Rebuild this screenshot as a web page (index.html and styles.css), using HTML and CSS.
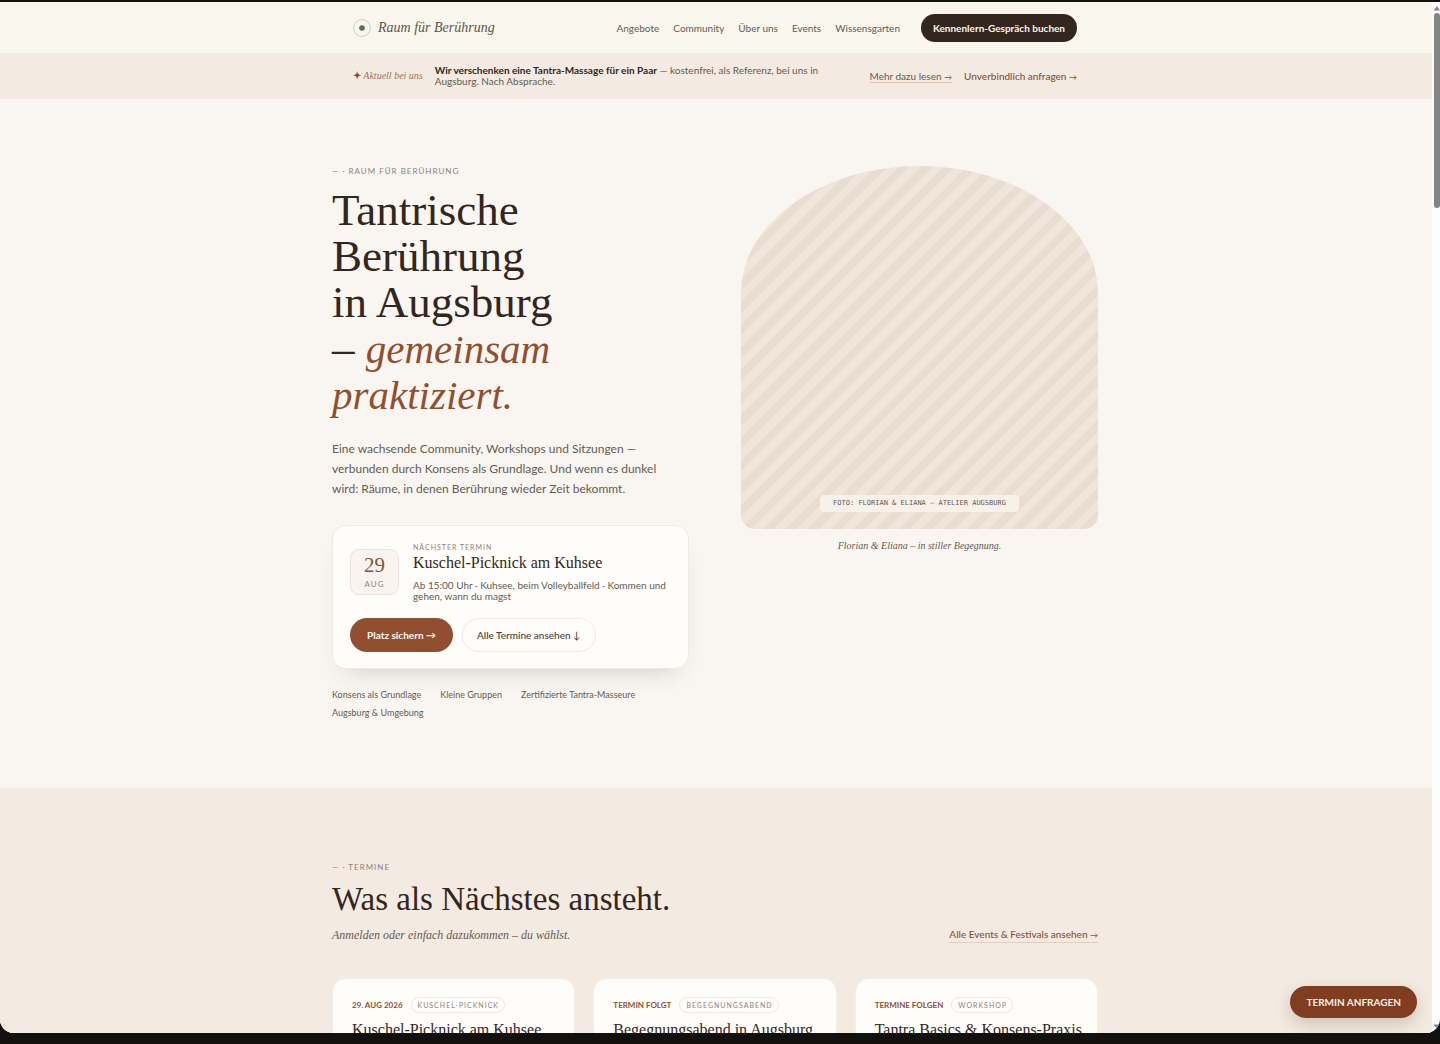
FILE: index.html
```html
<!DOCTYPE html>
<html lang="de">
<head>
<meta charset="utf-8">
<meta name="viewport" content="width=device-width, initial-scale=1">
<title>Raum für Berührung</title>
<link rel="stylesheet" href="styles.css">
</head>
<body>
<div class="window">
  <div class="page">
    <header class="header">
      <div class="bar">
        <a class="brand" href="#">
          <svg class="brand-mark" viewBox="0 0 18 18" aria-hidden="true">
            <circle cx="9" cy="9" r="8.4" fill="none" stroke="#cdd0c2" stroke-width="1"/>
            <circle cx="9" cy="9" r="2.8" fill="#5b6e50"/>
          </svg>
          Raum für Berührung
        </a>
        <nav class="nav" aria-label="Hauptmenü">
          <a href="#">Angebote</a>
          <a href="#">Community</a>
          <a href="#">Über uns</a>
          <a href="#">Events</a>
          <a href="#">Wissensgarten</a>
        </nav>
        <button class="btn btn-dark" type="button">Kennenlern-Gespräch buchen</button>
      </div>
    </header>

    <aside class="notice">
      <div class="bar">
        <span class="notice-tag"><b>✦</b> Aktuell bei uns</span>
        <p class="notice-text"><strong>Wir verschenken eine Tantra-Massage für ein Paar</strong> — kostenfrei, als Referenz, bei uns in Augsburg. Nach Absprache.</p>
        <div class="notice-links">
          <a class="underlined" href="#">Mehr dazu lesen <span class="arrow">→</span></a>
          <a class="accent" href="#">Unverbindlich anfragen <span class="arrow">→</span></a>
        </div>
      </div>
    </aside>

    <main>
      <section class="hero">
        <div class="container hero-grid">
          <div class="hero-copy">
            <p class="eyebrow">— · Raum für Berührung</p>
            <h1>Tantrische<br>Berührung<br>in Augsburg<br>– <em>gemeinsam<br>praktiziert.</em></h1>
            <p class="lead">Eine wachsende Community, Workshops und Sitzungen — verbunden durch Konsens als Grundlage. Und wenn es dunkel wird: Räume, in denen Berührung wieder Zeit bekommt.</p>
            <article class="next">
              <div class="next-info">
                <time class="date" datetime="2026-08-29"><span class="date-day">29</span><span class="date-month">Aug</span></time>
                <div>
                  <p class="next-label">Nächster Termin</p>
                  <h2 class="next-title">Kuschel-Picknick am Kuhsee</h2>
                  <p class="next-meta">Ab 15:00 Uhr · Kuhsee, beim Volleyballfeld · Kommen und gehen, wann du magst</p>
                </div>
              </div>
              <div class="next-actions">
                <button class="btn btn-primary" type="button">Platz sichern →</button>
                <button class="btn btn-outline" type="button">Alle Termine ansehen ↓</button>
              </div>
            </article>
            <ul class="facts">
              <li>Konsens als Grundlage</li>
              <li>Kleine Gruppen</li>
              <li>Zertifizierte Tantra-Masseure</li>
              <li>Augsburg &amp; Umgebung</li>
            </ul>
          </div>
          <figure class="portrait">
            <div class="arch"><span class="arch-label">Foto: Florian &amp; Eliana — Atelier Augsburg</span></div>
            <figcaption>Florian &amp; Eliana – in stiller Begegnung.</figcaption>
          </figure>
        </div>
      </section>

      <section class="events">
        <div class="container">
          <p class="eyebrow">— · Termine</p>
          <h2 class="events-title">Was als Nächstes ansteht.</h2>
          <div class="events-intro">
            <p>Anmelden oder einfach dazukommen – du wählst.</p>
            <a class="all-events" href="#">Alle Events &amp; Festivals ansehen <span class="arrow">→</span></a>
          </div>
          <div class="cards">
            <article class="card">
              <div class="card-top"><span class="when">29. Aug 2026</span><span class="tag">Kuschel-Picknick</span></div>
              <h3>Kuschel-Picknick am Kuhsee</h3>
            </article>
            <article class="card">
              <div class="card-top"><span class="when">Termin folgt</span><span class="tag">Begegnungsabend</span></div>
              <h3>Begegnungsabend in Augsburg</h3>
            </article>
            <article class="card">
              <div class="card-top"><span class="when">Termine folgen</span><span class="tag">Workshop</span></div>
              <h3>Tantra Basics &amp; Konsens-Praxis</h3>
            </article>
          </div>
        </div>
      </section>
    </main>
  </div>
  <div class="scrollbar" aria-hidden="true">
    <svg viewBox="0 0 8 8"><path d="M1.500 6.500 5 2l3 4.500z" fill="#858585"/></svg>
    <span class="thumb"></span>
    <svg class="down" viewBox="0 0 8 8"><path d="M1.500 1.500h7L5 6z" fill="#858585"/></svg>
  </div>
  <button class="btn floating" type="button">Termin anfragen</button>
</div>
</body>
</html>
```
FILE: styles.css
```css
:root {
  --ink: #33261e;
  --text: #665b53;
  --muted: #8d837b;
  --rust: #914f30;
  --cream: #f9f6f1;
  --sand: #f3eae1;
  --paper: #fffdf9;
  --line: #efe9e3;
  --serif: "Liberation Serif", serif;
  --sans: Lato, sans-serif;
}

* { box-sizing: border-box; }

body {
  margin: 0;
  height: 100vh;
  padding: 2px 0 11px;
  overflow: hidden;
  background: #12110f;
  color: var(--text);
  font: 10px/12px var(--sans);
}

h1, h2, h3, p, ul, figure { margin: 0; padding: 0; font-weight: 400; }
a { color: inherit; text-decoration: none; }

.window {
  position: relative;
  display: flex;
  height: 100%;
  overflow: hidden;
  border-radius: 0 0 14px 14px;
  background: #fcfcfc;
}

.page { flex: 1; overflow: hidden; background: var(--cream); }

.container, .bar { width: 100%; max-width: 766px; margin: 0 auto; }
.header, .notice, .hero, .events { padding: 0 22px 0 20px; }

.bar { display: flex; align-items: center; padding: 0 21px; }

.btn {
  border: 1px solid transparent;
  border-radius: 20px;
  font: 700 10px/12px var(--sans);
  white-space: nowrap;
  cursor: pointer;
}

.arrow { font-size: 8px; line-height: 1; }

/* Header */
.header { background: #f9f6ee; }
.header .bar { height: 51px; }

.brand {
  display: flex;
  align-items: center;
  gap: 7px;
  margin-right: auto;
  color: #5c5547;
  font: italic 14px/18px var(--serif);
}
.brand-mark { width: 18px; height: 18px; }

.nav { display: flex; gap: 14px; margin-right: 21px; }

.btn-dark { padding: 7px 11px; background: var(--ink); color: #f9f6f1; }

/* Notice */
.notice { background: var(--sand); }
.notice .bar { height: 46px; gap: 12px; }
.notice-tag { color: #a4745b; font: italic 10px/12px var(--serif); white-space: nowrap; }
.notice-tag b { color: var(--rust); font-style: normal; }
.notice-text { flex: 0 1 400px; line-height: 11px; }
.notice-text strong { color: var(--ink); font-weight: 700; }
.notice-links { display: flex; gap: 12px; margin-left: auto; white-space: nowrap; }
.underlined { border-bottom: 1px solid #dfc3b3; }
.accent { color: var(--rust); font-weight: 500; }

/* Hero */
.hero { padding-top: 67px; padding-bottom: 69px; }
.hero-grid { display: grid; grid-template-columns: 1fr 1fr; gap: 52px; }

.eyebrow {
  color: var(--muted);
  font-size: 8px;
  line-height: 10px;
  letter-spacing: 1px;
  text-transform: uppercase;
}

h1 {
  margin-top: 11px;
  color: var(--ink);
  font: 400 45px/46px var(--serif);
}
h1 em { color: var(--rust); font-size: 41px; line-height: 1; }

.lead { max-width: 342px; margin-top: 22px; font-size: 12px; line-height: 20px; }

.next {
  margin-top: 26px;
  padding: 16px 17px;
  border: 1px solid var(--line);
  border-radius: 14px;
  background: var(--paper);
  box-shadow: 0 14px 24px -14px rgba(51, 38, 30, .22);
}
.next-info { display: flex; align-items: center; gap: 14px; }

.date {
  display: flex;
  flex: none;
  flex-direction: column;
  align-items: center;
  width: 49px;
  padding: 5px 0;
  border: 1px solid #f0e2da;
  border-radius: 9px;
  background: #f9f4ef;
}
.date-day { color: var(--rust); font: 21px/21px var(--serif); }
.date-month { margin-top: 3px; color: var(--muted); font-size: 8px; line-height: 10px; letter-spacing: 1px; text-transform: uppercase; }

.next-label { color: var(--muted); font-size: 7px; line-height: 10px; letter-spacing: 1px; text-transform: uppercase; }
.next-title { color: var(--ink); font: 400 16px/22px var(--serif); }
.next-meta { margin-top: 6px; line-height: 11px; }

.next-actions { display: flex; gap: 9px; margin-top: 16px; }
.btn-primary { padding: 10px 16px; background: var(--rust); color: #fff8f2; }
.btn-outline { padding: 9px 14px; border-color: var(--line); background: transparent; color: #4b4039; font-weight: 500; }

.facts {
  display: flex;
  flex-wrap: wrap;
  gap: 6px 19px;
  margin-top: 20px;
  list-style: none;
  font-size: 9px;
}

/* Portrait */
.arch {
  display: flex;
  align-items: flex-end;
  justify-content: center;
  aspect-ratio: 357 / 363;
  padding-bottom: 17px;
  border-radius: 50% 50% 14px 14px / 35% 35% 14px 14px;
  background: repeating-linear-gradient(135deg, #e9dcd1 0 8px, #efe5db 8px 16px);
}
.arch-label {
  padding: 4px 13px;
  border-radius: 4px;
  background: #f8f1ea;
  font: 7px/9px "DejaVu Sans Mono", monospace;
  text-transform: uppercase;
}
.portrait figcaption { margin-top: 10px; font: italic 10px/13px var(--serif); text-align: center; }

/* Events */
.events { padding-top: 74px; background: var(--sand); }
.events-title { margin-top: 6px; color: var(--ink); font: 400 33px/42px var(--serif); }
.events-intro { display: flex; align-items: center; justify-content: space-between; margin-top: 7px; }
.events-intro p { font: italic 12px/16px var(--serif); }
.all-events { padding-bottom: 2px; border-bottom: 1px solid #e3cdbf; color: var(--rust); font-weight: 500; }

.cards { display: grid; grid-template-columns: repeat(3, minmax(0, 1fr)); gap: 18px; margin-top: 35px; }
.card {
  padding: 18px 19px 24px;
  border: 1px solid #f5eee7;
  border-radius: 14px;
  background: var(--paper);
}
.card-top { display: flex; align-items: center; gap: 8px; text-transform: uppercase; }
.when { color: var(--rust); font-size: 8px; font-weight: 700; }
.tag { padding: 1px 5px 1px 6px; border: 1px solid var(--line); border-radius: 8px; color: var(--muted); font-size: 7px; letter-spacing: 1px; }
.card h3 { margin-top: 7px; color: var(--ink); font: 400 16px/20px var(--serif); white-space: nowrap; }

/* Overlays */
.floating {
  position: absolute;
  right: 23px;
  bottom: 15px;
  padding: 9px 15px;
  background: #803d20;
  color: #fbf1e8;
  text-transform: uppercase;
  box-shadow: 0 6px 16px rgba(51, 38, 30, .2);
}

.scrollbar { display: flex; flex: none; flex-direction: column; width: 8px; padding: 2px 0; }
.scrollbar svg { width: 8px; height: 8px; }
.thumb { height: 19%; margin: 1px 0 0 2px; border-radius: 3px; background: #858585; }
.down { margin-top: auto; }
```
